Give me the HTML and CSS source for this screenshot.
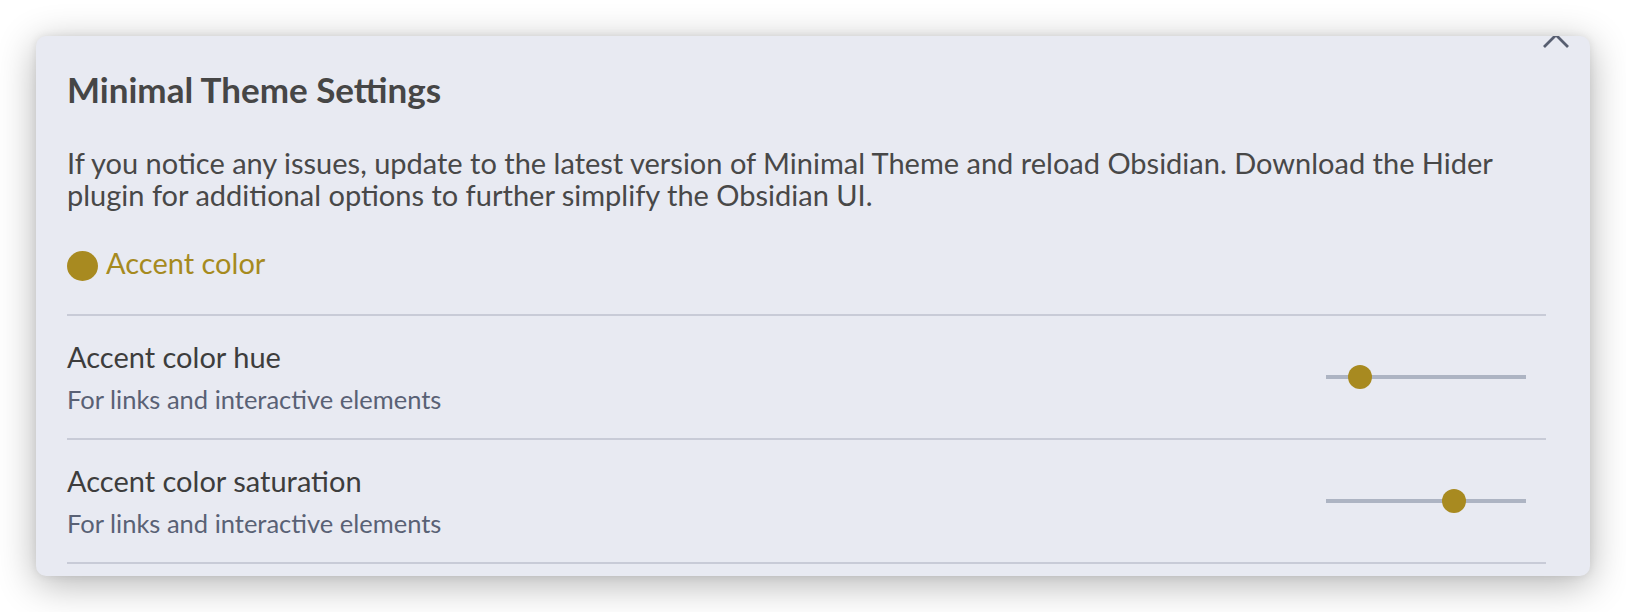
FILE: index.html
```html
<!DOCTYPE html>
<html lang="en">
<head>
<meta charset="utf-8">
<title>Minimal Theme Settings</title>
<link rel="stylesheet" href="styles.css">
</head>
<body>
<div class="page">
  <div class="modal">
    <button class="close" aria-label="Close">
      <svg viewBox="0 0 26 26" width="26" height="26"><path d="M1 1 L25 25 M25 1 L1 25" fill="none" stroke="#575e70" stroke-width="2.8" stroke-linecap="butt"/></svg>
    </button>
    <div class="content">
      <h1 class="title">Minimal Theme Settings</h1>
      <p class="intro">If you notice any issues, update to the latest version of Minimal Theme and reload Obsidian. Download the Hider plugin for additional options to further simplify the Obsidian UI.</p>
      <div class="heading"><span class="dot"></span><span class="heading-text">Accent color</span></div>
      <div class="setting">
        <div class="info">
          <div class="name">Accent color hue</div>
          <div class="desc">For links and interactive elements</div>
        </div>
        <div class="control"><input class="slider" type="range" min="0" max="360" value="45"></div>
      </div>
      <div class="setting">
        <div class="info">
          <div class="name">Accent color saturation</div>
          <div class="desc">For links and interactive elements</div>
        </div>
        <div class="control"><input class="slider" type="range" min="0" max="100" step="0.1" value="65.9"></div>
      </div>
    </div>
  </div>
</div>
</body>
</html>
```

FILE: styles.css
```css
html, body {
  margin: 0;
  padding: 0;
  background: #ffffff;
}

.page {
  padding: 36px;
  font-family: "Lato", "Noto Sans", sans-serif;
}

.modal {
  position: relative;
  overflow: hidden;
  background: #e8eaf2;
  border-radius: 10px;
  box-shadow: 0 8px 38px rgba(0, 0, 0, 0.3), 0 0 8px rgba(0, 0, 0, 0.08);
}

.close {
  position: absolute;
  top: -14px;
  right: 21px;
  width: 26px;
  height: 26px;
  padding: 0;
  border: 0;
  background: transparent;
}

.close svg {
  display: block;
}

.content {
  padding: 35px 44px 12px 31px;
}

.title {
  margin: 0;
  font-size: 35px;
  line-height: 36px;
  font-weight: 700;
  color: #464646;
}

.intro {
  margin: 40px 0 0;
  font-size: 29px;
  line-height: 32px;
  color: #484848;
}

.heading {
  display: flex;
  align-items: flex-start;
  gap: 8px;
  margin-top: 34px;
  padding-bottom: 33px;
  border-bottom: 2px solid #c8cbd7;
}

.dot {
  width: 31px;
  height: 30px;
  margin-top: 6px;
  border-radius: 50%;
  background: #a88a20;
  flex: none;
}

.heading-text {
  font-size: 29px;
  line-height: 36px;
  color: #a68a1f;
}

.setting {
  display: flex;
  align-items: center;
  justify-content: space-between;
  padding: 24px 20px 24px 0;
  border-bottom: 2px solid #c8cbd7;
}

.name {
  font-size: 29px;
  line-height: 34px;
  color: #3d3d3d;
}

.desc {
  margin-top: 10px;
  font-size: 25.5px;
  line-height: 30px;
  color: #596175;
}

.control {
  display: flex;
  align-items: center;
  height: 24px;
}

.slider {
  -webkit-appearance: none;
  appearance: none;
  width: 200px;
  height: 4px;
  margin: 0;
  background: #adb4c3;
  border: 0;
  border-radius: 0;
  outline: none;
}

.slider::-webkit-slider-thumb {
  -webkit-appearance: none;
  appearance: none;
  width: 24px;
  height: 24px;
  border: 0;
  border-radius: 50%;
  background: #a88a20;
}
```
